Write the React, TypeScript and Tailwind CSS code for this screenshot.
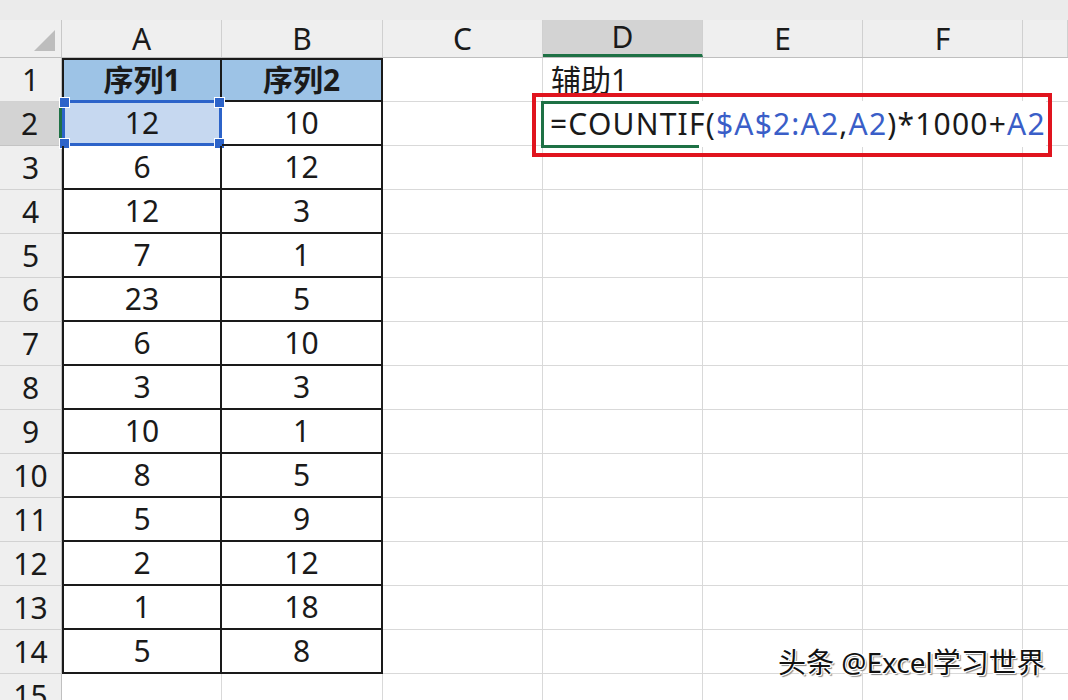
import React from 'react';

const colW = ['w-[62px]', 'w-[160px]', 'w-[161px]', 'w-[160px]', 'w-[160px]', 'w-[160px]', 'w-[160px]', 'flex-1'];
const letters = ['A', 'B', 'C', 'D', 'E', 'F', ''];

const colA = ['序列1', '12', '6', '12', '7', '23', '6', '3', '10', '8', '5', '2', '1', '5'];
const colB = ['序列2', '10', '12', '3', '1', '5', '10', '3', '1', '5', '9', '12', '18', '8'];

const Handle: React.FC<{ className: string }> = ({ className }) => (
  <div className={`absolute w-[11px] h-[11px] bg-[#2c63c9] border border-white ${className}`} />
);

const HeaderRow = () => (
  <div className="flex h-[38px] bg-[#efefef] border-b border-[#bfbfbf]">
    <div className={`${colW[0]} relative border-r border-[#c8c8c8]`}>
      <svg className="absolute left-[34px] top-[10px]" width="21" height="21" viewBox="0 0 21 21">
        <polygon points="21,0 21,21 0,21" fill="#bdbdbd" />
      </svg>
    </div>
    {letters.map((l, i) => (
      <div
        key={i}
        className={`${colW[i + 1]} flex items-center justify-center border-r border-[#d0d0d0] ${
          l === 'D' ? 'bg-[#d3d3d3] border-b-[3px] border-b-[#1e7145]' : ''
        }`}
      >
        {l}
      </div>
    ))}
  </div>
);

const Row: React.FC<{ r: number }> = ({ r }) => {
  const inTable = r <= 14;
  const head = r === 1;
  const tableCell = (first: boolean) =>
    `${first ? colW[1] : colW[2]} relative flex items-center justify-center ${
      inTable
        ? `border-r-2 border-b-2 border-[#1a1a1a] ${first ? 'border-l-2' : ''} ${head ? 'border-t-2 bg-[#9dc3e6] font-bold' : ''}`
        : 'border-r border-b border-[#d9d9d9]'
    }`;
  return (
    <div className="flex h-[44px]">
      <div
        className={`${colW[0]} flex items-center justify-center border-b border-r ${
          r === 2
            ? 'bg-[#d3d3d3] border-b-[#c4c4c4] border-r-[3px] border-r-[#1e7145]'
            : 'bg-[#efefef] border-b-[#d2d2d2] border-r-[#c0c0c0]'
        }`}
      >
        {r}
      </div>
      <div className={tableCell(true)}>
        {r === 2 && <div className="absolute inset-0 bg-[#c6d8f0]" />}
        <span className="relative">{colA[r - 1] ?? ''}</span>
        {r === 2 && (
          <div className="absolute -left-[2px] -top-[2px] -right-[2px] -bottom-[2px] border-[3px] border-[#2c63c9]">
            <Handle className="-left-[6px] -top-[6px]" />
            <Handle className="-right-[6px] -top-[6px]" />
            <Handle className="-left-[6px] -bottom-[6px]" />
            <Handle className="-right-[6px] -bottom-[6px]" />
          </div>
        )}
      </div>
      <div className={tableCell(false)}>{colB[r - 1] ?? ''}</div>
      <div className={`${colW[3]} border-r border-b border-[#d9d9d9]`} />
      <div className={`${colW[4]} relative flex items-center pl-[8px] border-r border-b border-[#d9d9d9]`}>
        {r === 1 && <span>辅助1</span>}
        {r === 2 && (
          <>
            <div className="absolute -left-[11px] -top-[9px] w-[520px] h-[64px] border-[4px] border-[#e0141e] z-20" />
            <div className="absolute -left-[2px] -top-[1px] w-[505px] h-[46px] bg-white z-10 flex items-center pl-[9px] tracking-[1.2px]">
              <span>=COUNTIF(</span>
              <span className="text-[#3a5ec8]">$A$2:A2</span>
              <span>,</span>
              <span className="text-[#3a5ec8]">A2</span>
              <span>)*1000+</span>
              <span className="text-[#3a5ec8]">A2</span>
            </div>
            <div className="absolute -left-[2px] -top-[1px] w-[158px] h-[47px] border-[3px] border-[#1e7145] border-r-0 z-10" />
          </>
        )}
      </div>
      <div className={`${colW[5]} border-r border-b border-[#d9d9d9]`} />
      <div className={`${colW[6]} border-r border-b border-[#d9d9d9]`} />
      <div className={`${colW[7]} border-b border-[#d9d9d9]`} />
    </div>
  );
};

export default function App() {
  return (
    <div className="relative w-[1068px] h-[700px] overflow-hidden bg-white text-[30px] leading-none text-[#1a1a1a] font-['Noto_Sans','Noto_Sans_CJK_SC',sans-serif]">
      <div className="h-[20px] bg-[#ebebeb]" />
      <HeaderRow />
      {Array.from({ length: 15 }, (_, i) => (
        <Row key={i} r={i + 1} />
      ))}
      <div className="absolute left-[778px] top-[648px] text-[28px] text-[#111] [text-shadow:1px_1px_0_#fff,-1px_-1px_0_#fff,1px_-1px_0_#fff,-1px_1px_0_#fff,2px_2px_1px_#888]">
        头条 @Excel学习世界
      </div>
    </div>
  );
}
